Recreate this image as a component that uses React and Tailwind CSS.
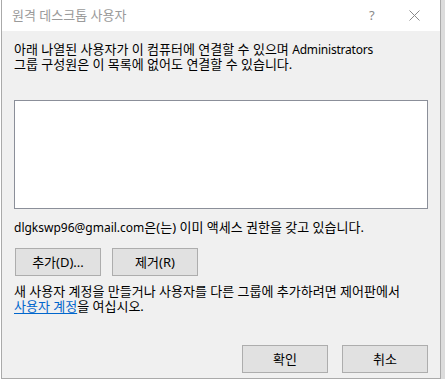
import { useState } from "react";

const font = { fontFamily: '"Noto Sans", "Noto Sans CJK KR", sans-serif' };

function DlgButton({ children, className = "" }) {
  return (
    <button
      type="button"
      className={
        "h-[28px] w-[86px] border border-[#adadad] bg-[#e1e1e1] text-[13px] leading-none text-black flex items-center justify-center " +
        className
      }
    >
      {children}
    </button>
  );
}

function App() {
  const [users] = useState([]);

  return (
    <div className="w-[446px] h-[387px] bg-white overflow-hidden" style={font}>
      <div className="ml-px w-[440px] h-[379px] border border-t-0 border-[#aaaaaa] bg-[#f0f0f0] flex flex-col shadow-[4px_0_0_#dcdcdc]">
        {/* title bar */}
        <div className="h-[31px] bg-white flex items-center pl-[10px] text-[13px] text-[#9a9a9a]">
          <span className="flex-1">원격 데스크톱 사용자</span>
          <span className="w-[13px] mr-[27px] text-[13px] text-[#8a8a8a]">?</span>
          <svg width="11" height="11" viewBox="0 0 11 11" className="mr-[20px]">
            <path d="M0.5 0.5 L10.5 10.5 M10.5 0.5 L0.5 10.5" stroke="#8a8a8a" strokeWidth="1" />
          </svg>
        </div>

        <div className="flex-1 flex flex-col px-[12px] pt-[11px] pb-[5px] text-[13px] leading-[15px] text-black">
          <p>
            아래 나열된 사용자가 이 컴퓨터에 연결할 수 있으며{" "}
            <span className="text-[12px] tracking-[-0.2px]">Administrators</span>
            <br />
            그룹 구성원은 이 목록에 없어도 연결할 수 있습니다.
          </p>

          <div className="mt-[28px] h-[109px] border border-[#8b8f99] bg-white">
            {users.map((u) => (
              <div key={u}>{u}</div>
            ))}
          </div>

          <p className="mt-[11px]">
            <span className="text-[12px]">dlgkswp96@gmail.com</span>은(는) 이미 액세스 권한을 갖고 있습니다.
          </p>

          <div className="mt-[13px] ml-px flex gap-[11px]">
            <DlgButton>추가(D)...</DlgButton>
            <DlgButton>제거(R)</DlgButton>
          </div>

          <p className="mt-[8px]">
            새 사용자 계정을 만들거나 사용자를 다른 그룹에 추가하려면 제어판에서
            <br />
            <a href="#" className="text-[#0066cc] underline underline-offset-2">
              사용자 계정
            </a>
            을 여십시오.
          </p>

          <div className="flex-1" />

          <div className="flex justify-end gap-[14px]">
            <DlgButton>확인</DlgButton>
            <DlgButton>취소</DlgButton>
          </div>
        </div>
      </div>
    </div>
  );
}

export default App;
